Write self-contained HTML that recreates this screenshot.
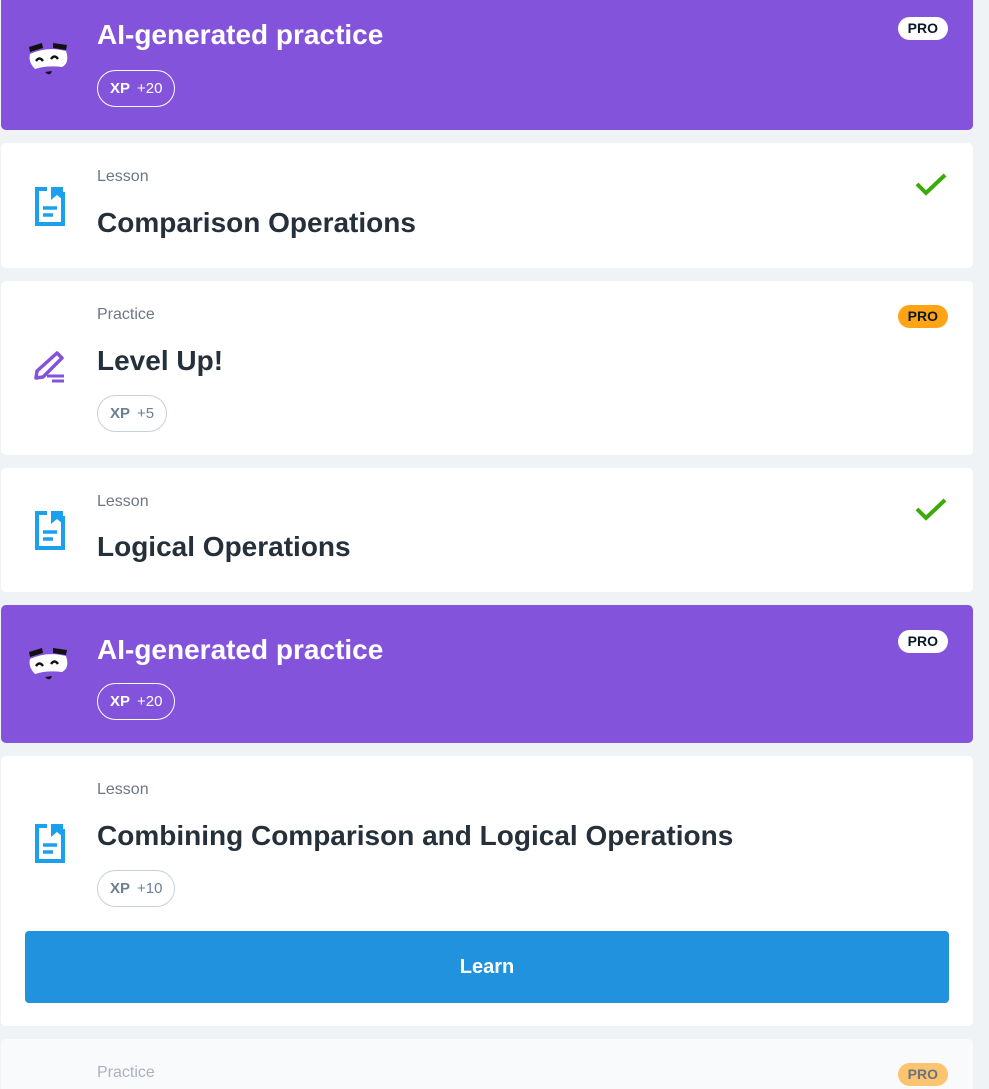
<!DOCTYPE html>
<html><head><style>
*{margin:0;padding:0;box-sizing:border-box}
html,body{width:989px;height:1089px;overflow:hidden}
body{background:#f0f3f6;position:relative;font-family:"Liberation Sans",sans-serif;color:#25303b}
.c{position:absolute;left:1px;width:972px;background:#fff;border-radius:5px}
.p{background:#8353db}
.lab{position:absolute;left:96px;font-size:16px;color:#6b7785}
.t{position:absolute;left:96px;font-size:28px;font-weight:bold;letter-spacing:0;white-space:nowrap}
.xp{position:absolute;left:96px;height:37px;border:1px solid #c8d0d8;border-radius:19px;font-size:15px;color:#6b7f93;line-height:35px;padding:0 12px}
.xp b{margin-right:7px}
.p .t{color:#fff}
.p .xp{border-color:#fff;color:#fff}
.pro{position:absolute;right:25px;height:23px;border-radius:12px;font-size:14px;font-weight:bold;line-height:23px;padding:0 10px;color:#0d1826;background:#fff}
.o{background:#ffa515}
.ic{position:absolute;left:32px}
.chk{position:absolute;right:26px}
</style></head><body>

<div class="c p" style="top:-10px;height:140px">
 <svg class="ic" style="top:51px;left:25px" width="46" height="40" viewBox="0 0 44 40"><path d="M2 6 L15 2 L16 7 L3 11Z M26 2 L40 4 L39 9 L26 7Z" fill="#111"/><path d="M3 13 Q20 5 39 10 Q43 22 35 26 Q20 24 8 28 Q1 21 3 13Z" fill="#fff"/><path d="M9 20 Q12.5 15 16 20 M24 18 Q27.5 13 31 18" stroke="#111" stroke-width="2.4" fill="none"/><path d="M18 31 L25 30 Q23 36 18 31Z" fill="#111"/></svg>
 <div class="t" style="top:29px">AI-generated practice</div>
 <div class="xp" style="top:80px"><b>XP</b>+20</div>
 <div class="pro" style="top:27px">PRO</div>
</div>

<div class="c" style="top:143px;height:125px">
 <svg class="ic" style="top:43px" width="34" height="40" viewBox="0 0 34 40"><path d="M14 3 H4 V38 H30 V6" stroke="#1aa0ef" stroke-width="4" fill="none"/><path d="M18 1 H30 V14 L24 9 L18 14Z" fill="#1aa0ef"/><path d="M10 22 H24 M10 29 H20" stroke="#1aa0ef" stroke-width="3.5"/></svg>
 <div class="lab" style="top:25px">Lesson</div>
 <div class="t" style="top:64px">Comparison Operations</div>
 <svg class="chk" style="top:29px" width="32" height="24" viewBox="0 0 32 24"><path d="M2 12 L11 21 L30 3" stroke="#3caa08" stroke-width="4" fill="none"/></svg>
</div>

<div class="c" style="top:281px;height:174px">
 <svg class="ic" style="top:69px" width="34" height="34" viewBox="0 0 34 34"><path d="M24 3 L29 8 L10 27 L3 28 L4 21Z" stroke="#8353db" stroke-width="3.5" fill="none" stroke-linejoin="round"/><path d="M14 26 H31 M19 31 H31" stroke="#8353db" stroke-width="3"/></svg>
 <div class="lab" style="top:25px">Practice</div>
 <div class="t" style="top:64px">Level Up!</div>
 <div class="xp" style="top:114px"><b>XP</b>+5</div>
 <div class="pro o" style="top:24px">PRO</div>
</div>

<div class="c" style="top:468px;height:124px">
 <svg class="ic" style="top:42px" width="34" height="40" viewBox="0 0 34 40"><path d="M14 3 H4 V38 H30 V6" stroke="#1aa0ef" stroke-width="4" fill="none"/><path d="M18 1 H30 V14 L24 9 L18 14Z" fill="#1aa0ef"/><path d="M10 22 H24 M10 29 H20" stroke="#1aa0ef" stroke-width="3.5"/></svg>
 <div class="lab" style="top:25px">Lesson</div>
 <div class="t" style="top:63px">Logical Operations</div>
 <svg class="chk" style="top:29px" width="32" height="24" viewBox="0 0 32 24"><path d="M2 12 L11 21 L30 3" stroke="#3caa08" stroke-width="4" fill="none"/></svg>
</div>

<div class="c p" style="top:605px;height:138px">
 <svg class="ic" style="top:41px;left:25px" width="46" height="40" viewBox="0 0 44 40"><path d="M2 6 L15 2 L16 7 L3 11Z M26 2 L40 4 L39 9 L26 7Z" fill="#111"/><path d="M3 13 Q20 5 39 10 Q43 22 35 26 Q20 24 8 28 Q1 21 3 13Z" fill="#fff"/><path d="M9 20 Q12.5 15 16 20 M24 18 Q27.5 13 31 18" stroke="#111" stroke-width="2.4" fill="none"/><path d="M18 31 L25 30 Q23 36 18 31Z" fill="#111"/></svg>
 <div class="t" style="top:29px">AI-generated practice</div>
 <div class="xp" style="top:78px"><b>XP</b>+20</div>
 <div class="pro" style="top:25px">PRO</div>
</div>

<div class="c" style="top:756px;height:270px">
 <svg class="ic" style="top:67px" width="34" height="40" viewBox="0 0 34 40"><path d="M14 3 H4 V38 H30 V6" stroke="#1aa0ef" stroke-width="4" fill="none"/><path d="M18 1 H30 V14 L24 9 L18 14Z" fill="#1aa0ef"/><path d="M10 22 H24 M10 29 H20" stroke="#1aa0ef" stroke-width="3.5"/></svg>
 <div class="lab" style="top:25px">Lesson</div>
 <div class="t" style="top:64px">Combining Comparison and Logical Operations</div>
 <div class="xp" style="top:114px"><b>XP</b>+10</div>
 <div style="position:absolute;left:24px;top:175px;width:924px;height:72px;background:#2192dd;border-radius:4px;color:#fff;font-weight:bold;font-size:20px;text-align:center;line-height:72px">Learn</div>
</div>

<div class="c" style="top:1039px;height:80px;background:#f9fafb">
 <div class="lab" style="top:25px;color:#a8b2bd">Practice</div>
 <div class="pro" style="top:24px;background:#fcc46e;color:#6b7280">PRO</div>
</div>
</body></html>
